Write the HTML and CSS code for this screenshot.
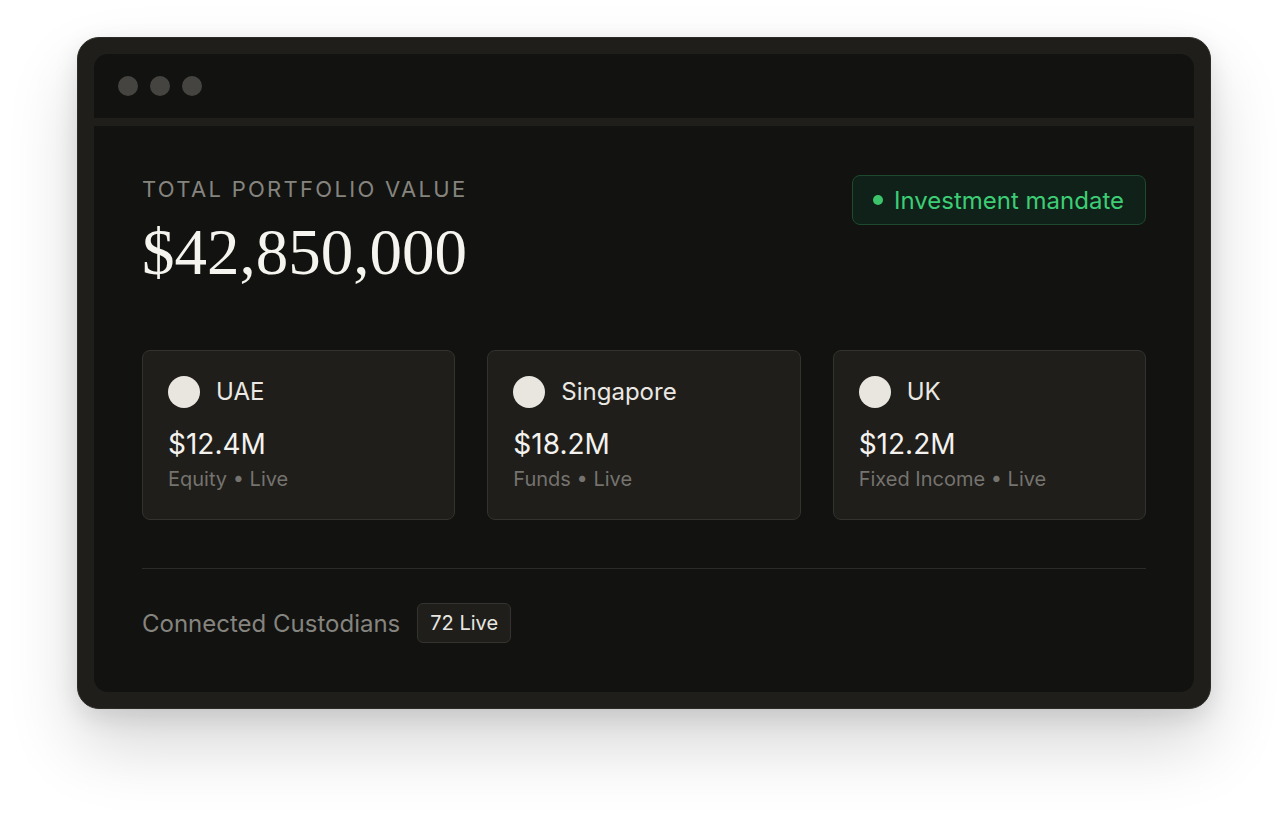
FILE: index.html
```html
<!DOCTYPE html>
<html lang="en">
<head>
    <meta charset="UTF-8">
    <meta name="viewport" content="width=device-width, initial-scale=1.0">
    <title>Portfolio Overview</title>
    <link rel="stylesheet" href="styles.css">
</head>
<body>

    <div class="device">
        <div class="titlebar">
            <span class="dot"></span><span class="dot"></span><span class="dot"></span>
        </div>

        <div class="screen">
            <div class="top-row">
                <div>
                    <div class="label">TOTAL PORTFOLIO VALUE</div>
                    <div class="total">$42,850,000</div>
                </div>
                <div class="mandate"><span class="mandate-dot"></span>Investment mandate</div>
            </div>

            <div class="regions">
                <div class="card">
                    <div class="card-head"><span class="flag"></span>UAE</div>
                    <div class="card-value">$12.4M</div>
                    <div class="card-sub">Equity &bull; Live</div>
                </div>
                <div class="card">
                    <div class="card-head"><span class="flag"></span>Singapore</div>
                    <div class="card-value">$18.2M</div>
                    <div class="card-sub">Funds &bull; Live</div>
                </div>
                <div class="card">
                    <div class="card-head"><span class="flag"></span>UK</div>
                    <div class="card-value">$12.2M</div>
                    <div class="card-sub">Fixed Income &bull; Live</div>
                </div>
            </div>

            <div class="divider"></div>

            <div class="footer">
                <span class="footer-label">Connected Custodians</span>
                <span class="pill">72 Live</span>
            </div>
        </div>
    </div>

</body>
</html>
```

FILE: styles.css
```css
body { margin: 0; min-height: 826px; background: #ffffff; font-family: Inter, 'Noto Sans', sans-serif; }

/* outer frame */
.device {
    width: 1100px; margin: 37px auto 0; padding: 16px;
    background: #1f1e1b; border-radius: 22px; border: 1px solid #2c2b28;
    box-shadow: 0 36px 70px rgba(0, 0, 0, 0.16), 0 8px 24px rgba(0, 0, 0, 0.10);
}

.titlebar {
    height: 64px; background: #121210; border-radius: 14px 14px 0 0;
    display: flex; align-items: center; gap: 12px; padding-left: 24px;
}
.dot { width: 20px; height: 20px; border-radius: 50%; background: #454440; }

.screen {
    margin-top: 8px; background: #121210; border-radius: 0 0 14px 14px;
    padding: 49px 48px 49px;
}

.top-row { display: flex; justify-content: space-between; align-items: flex-start; }
.label { font-size: 22px; line-height: 28px; letter-spacing: 2.3px; color: #85847f; }
.total {
    margin-top: 19px; font-family: 'Liberation Serif', serif; font-size: 65px; line-height: 60px;
    color: #f6f4ef;
}

.mandate {
    height: 50px; padding: 0 21px 0 20px; box-sizing: border-box;
    display: flex; align-items: center; gap: 11px;
    background: #0f2118; border: 1px solid #1d4a2f; border-radius: 8px;
    color: #3dcd75; font-size: 24px;
}
.mandate-dot { width: 10px; height: 10px; border-radius: 50%; background: #3cc46b; }

.regions { display: grid; grid-template-columns: 1fr 1fr 1fr; gap: 32px; margin-top: 68px; }
.card {
    background: #1f1e1b; border: 1px solid #33322e; border-radius: 8px;
    padding: 25px 25px 28px;
}
.card-head { display: flex; align-items: center; gap: 16px; font-size: 24px; line-height: 32px; color: #ebe8e3; }
.flag { width: 32px; height: 32px; border-radius: 50%; background: #e9e5df; }
.card-value { margin-top: 19px; font-size: 28px; line-height: 34px; color: #f4f2ee; }
.card-sub { margin-top: 6px; font-size: 20px; line-height: 24px; color: #75736e; }

.divider { height: 1px; background: #2c2b28; margin-top: 48px; }

.footer { display: flex; align-items: center; gap: 17px; margin-top: 34px; }
.footer-label { font-size: 24px; color: #85847f; }
.pill {
    height: 40px; box-sizing: border-box; padding: 0 12px; display: flex; align-items: center;
    background: #1f1e1b; border: 1px solid #35332f; border-radius: 6px;
    font-size: 20px; color: #e8e6e1;
}
```
